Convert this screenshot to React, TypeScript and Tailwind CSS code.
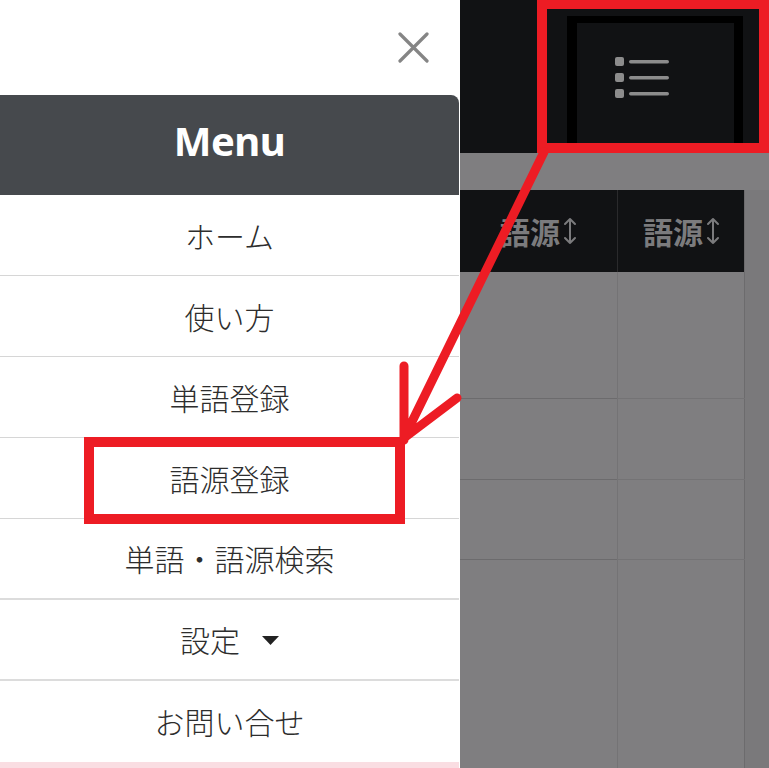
import React from "react";

const menuItems = [
  { label: "ホーム", line: "border-b border-[#d6d6d6]" },
  { label: "使い方", line: "border-b border-[#d6d6d6]" },
  { label: "単語登録", line: "border-b border-[#d6d6d6]" },
  { label: "語源登録", line: "border-b border-[#d6d6d6]" },
  { label: "単語・語源検索", line: "border-b-2 border-[#dcdcdc]" },
  { label: "設定", line: "border-b-2 border-[#dcdcdc]", caret: true },
  { label: "お問い合せ", line: "" },
];

const jp = { fontFamily: '"Noto Sans CJK JP", "Noto Sans", sans-serif' };

function SortArrow() {
  return (
    <svg width="14" height="28" viewBox="0 0 14 28" className="ml-[1px]">
      <path
        d="M7 2v24M2 7l5-5 5 5M2 21l5 5 5-5"
        stroke="#7b7b7d"
        strokeWidth="2"
        fill="none"
        strokeLinecap="round"
        strokeLinejoin="round"
      />
    </svg>
  );
}

function HeaderCell({ border }: { border?: boolean }) {
  return (
    <div
      className={`flex items-center justify-center gap-[2px] text-[30px] font-bold text-[#7b7b7d] ${
        border ? "border-l border-[#2a2a2c]" : ""
      }`}
      style={jp}
    >
      <span>語源</span>
      <SortArrow />
    </div>
  );
}

export default function App() {
  return (
    <div className="relative flex w-[769px] h-[768px] overflow-hidden bg-white">
      {/* Drawer */}
      <div className="w-[460px] h-full flex flex-col bg-white overflow-hidden">
        <div className="h-[95px] shrink-0 flex items-start justify-end pr-[31px] pt-[32px]">
          <svg width="31" height="31" viewBox="0 0 31 31">
            <path
              d="M2 2l27 27M29 2L2 29"
              stroke="#858585"
              strokeWidth="3.2"
              strokeLinecap="round"
            />
          </svg>
        </div>
        <div className="w-[459px] h-[100px] shrink-0 rounded-tr-[8px] bg-[#46494d] flex items-center justify-center pb-[9px]">
          <span
            className="text-white text-[40px] font-bold tracking-[-0.5px]"
            style={{ fontFamily: '"Noto Sans", sans-serif' }}
          >
            Menu
          </span>
        </div>
        <div className="w-[459px] shrink-0 flex flex-col" style={jp}>
          {menuItems.map((item) => (
            <div
              key={item.label}
              className={`h-[81px] shrink-0 flex items-center justify-center text-[30px] font-light text-[#2d2d2d] ${item.line}`}
            >
              <span>{item.label}</span>
              {item.caret && (
                <svg width="17" height="9" viewBox="0 0 17 9" className="ml-[22px] mt-[2px]">
                  <path d="M0 0h17L8.5 9z" fill="#222" />
                </svg>
              )}
            </div>
          ))}
          <div className="h-[8px] shrink-0 bg-[#fadde2]" />
        </div>
      </div>

      {/* Page behind overlay */}
      <div className="flex-1 h-full flex flex-col bg-[#7f7e80]">
        <div className="h-[153px] shrink-0 bg-[#111214] flex justify-end items-end pr-[26px]">
          <div className="w-[176px] h-[137px] border-l-[10px] border-r-[9px] border-t-[7px] border-black bg-[#111214] pl-[38px] pt-[34px]">
            <svg width="54" height="42" viewBox="0 0 54 42">
              <rect x="0" y="0" width="9" height="9" rx="2" fill="#8c8c8c" />
              <rect x="0" y="16" width="9" height="9" rx="2" fill="#8c8c8c" />
              <rect x="0" y="32" width="9" height="9" rx="2" fill="#8c8c8c" />
              <rect x="14" y="3" width="40" height="3.5" rx="1.7" fill="#8c8c8c" />
              <rect x="14" y="19" width="40" height="3.5" rx="1.7" fill="#8c8c8c" />
              <rect x="14" y="35" width="40" height="3.5" rx="1.7" fill="#8c8c8c" />
            </svg>
          </div>
        </div>
        <div className="h-[37px] shrink-0" />
        <div className="flex flex-1">
          <div className="w-[285px] flex flex-col border-r border-[#6c6b6d]">
            <div className="h-[82px] shrink-0 grid grid-cols-[157px_128px] bg-[#111214]">
              <HeaderCell />
              <HeaderCell border />
            </div>
            <div className="flex-1 grid grid-cols-[157px_128px] grid-rows-[126px_81px_80px_1fr]">
              {[0, 1, 2, 3].map((r) => (
                <React.Fragment key={r}>
                  <div className={r > 0 ? "border-t border-[#6c6b6d]" : ""} />
                  <div
                    className={`border-l border-[#747375] ${
                      r > 0 ? "border-t border-[#6c6b6d]" : ""
                    }`}
                  />
                </React.Fragment>
              ))}
            </div>
          </div>
          <div className="flex-1 bg-[#7a797b]" />
        </div>
      </div>

      {/* Annotations */}
      <svg
        className="absolute inset-0 pointer-events-none"
        width="769"
        height="768"
        viewBox="0 0 769 768"
      >
        <rect x="542" y="4" width="222" height="144" fill="none" stroke="#ed1c24" strokeWidth="10" />
        <rect x="89" y="442" width="311" height="77" fill="none" stroke="#ed1c24" strokeWidth="10" />
        <path
          d="M544 152L404 438M404 366V440M457 398L404 438"
          fill="none"
          stroke="#ed1c24"
          strokeWidth="9"
          strokeLinecap="round"
          strokeLinejoin="round"
        />
      </svg>
    </div>
  );
}
